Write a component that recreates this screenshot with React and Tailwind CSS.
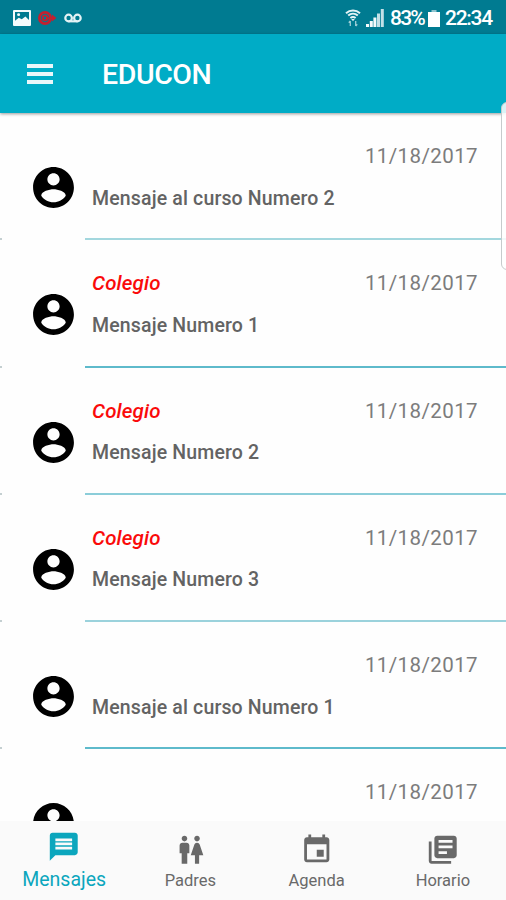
import React, { useState } from 'react';

const mensajes = [
    { id: 1, autor: '', texto: 'Mensaje al curso Numero 2', fecha: '11/18/2017', linea: 'h-[2px] bg-[#a3d7de]' },
    { id: 2, autor: 'Colegio', texto: 'Mensaje Numero 1', fecha: '11/18/2017', linea: 'h-[2px] bg-[#5ebacb]' },
    { id: 3, autor: 'Colegio', texto: 'Mensaje Numero 2', fecha: '11/18/2017', linea: 'h-[2px] bg-[#8bcdd9]' },
    { id: 4, autor: 'Colegio', texto: 'Mensaje Numero 3', fecha: '11/18/2017', linea: 'h-[2px] bg-[#9bd2dc]' },
    { id: 5, autor: '', texto: 'Mensaje al curso Numero 1', fecha: '11/18/2017', linea: 'h-[2px] bg-[#5ebacb]' },
    { id: 6, autor: '', texto: '', fecha: '11/18/2017', linea: 'h-[2px] bg-[#8bcdd9]' },
];

const tabs = [
    {
        nombre: 'Mensajes',
        icono: 'M20 2H4c-1.1 0-1.99.9-1.99 2L2 22l4-4h14c1.1 0 2-.9 2-2V4c0-1.1-.9-2-2-2zm-2 12H6v-2h12v2zm0-3H6V9h12v2zm0-3H6V6h12v2z',
    },
    {
        nombre: 'Padres',
        icono: 'M5.5 22v-7.5H4V9c0-1.1.9-2 2-2h3c1.1 0 2 .9 2 2v5.5H9.5V22h-4zM18 22v-6h3l-2.54-7.63C18.18 7.55 17.42 7 16.56 7h-.12c-.86 0-1.63.55-1.9 1.37L12 16h3v6h3zM7.5 6c1.11 0 2-.89 2-2s-.89-2-2-2-2 .89-2 2 .89 2 2 2zm9 0c1.11 0 2-.89 2-2s-.89-2-2-2-2 .89-2 2 .89 2 2 2z',
    },
    {
        nombre: 'Agenda',
        icono: 'M17 12h-5v5h5v-5zM16 1v2H8V1H6v2H5c-1.11 0-1.99.9-1.99 2L3 19c0 1.1.89 2 2 2h14c1.1 0 2-.9 2-2V5c0-1.1-.9-2-2-2h-1V1h-2zm3 18H5V8h14v11z',
    },
    {
        nombre: 'Horario',
        icono: 'M4 6H2v14c0 1.1.9 2 2 2h14v-2H4V6zm16-4H8c-1.1 0-2 .9-2 2v12c0 1.1.9 2 2 2h12c1.1 0 2-.9 2-2V4c0-1.1-.9-2-2-2zm-1 9H9V9h10v2zm-4 4H9v-2h6v2zm4-8H9V5h10v2z',
    },
];

function StatusBar() {
    return (
        <div className="flex h-[34px] shrink-0 items-center justify-between bg-[#007b91] pl-[13px] pr-[14px] pt-[2px] text-white">
            <div className="flex items-center gap-[7px] pb-px">
                <svg className="h-[16px] w-[18px]" viewBox="0 0 18 17" preserveAspectRatio="none">
                    <path fill="#f4fbfc" fillRule="evenodd" d="M1 0h16a1 1 0 0 1 1 1v15a1 1 0 0 1-1 1H1a1 1 0 0 1-1-1V1a1 1 0 0 1 1-1zM2 2v9.3l3.8-3 3 1.6 3.600-3 3.600 3.600V2z" />
                    <circle cx="5.6" cy="5" r="1.5" fill="#f4fbfc" />
                </svg>
                <svg className="h-[16px] w-[19px]" viewBox="0 0 19 16">
                    <circle cx="7" cy="8" r="5.600" fill="none" stroke="#c3202f" strokeWidth="2.8" />
                    <circle cx="7" cy="8" r="2.300" fill="none" stroke="#c3202f" strokeWidth="1.8" />
                    <path d="M8 7.2h6V4.500l4.400 3.500-4.400 3.500V9.200H8z" fill="#c3202f" />
                </svg>
                <svg className="h-[10px] w-[18px]" viewBox="0 0 18 10" fill="none" stroke="#e4f3f5" strokeWidth="2.2">
                    <circle cx="4.600" cy="5" r="3.300" />
                    <circle cx="13.400" cy="5" r="3.300" />
                    <path d="M4.600 8.300h8.800" />
                </svg>
            </div>
            <div className="flex items-center">
                <svg className="h-[18px] w-[16px]" viewBox="0 0 16 18" fill="none" stroke="#e4f3f5">
                    <path d="M1 4.200C5 .600 11 .600 15 4.200M3.200 6.600c2.800-2.400 6.800-2.400 9.600 0M5.400 9c1.600-1.300 3.600-1.300 5.200 0" strokeWidth="2" />
                    <path d="M6.200 10h3.600L8 12.200z" fill="#e4f3f5" stroke="none" />
                    <path d="M5.300 12v5M3.700 13.600 5.300 12M10.700 12v5M12.300 15.400 10.700 17" strokeWidth="1.300" opacity=".7" />
                </svg>
                <svg className="ml-[5px] h-[18px] w-[18px]" viewBox="0 0 18 18" fill="#f4fbfc">
                    <path d="M0 15h3v3H0zM3.800 12h3v6h-3zM7.400 8.500h3V18h-3z" />
                    <path d="M11 4.500h3V18h-3zM14.800 0h3v18h-3z" opacity=".8" />
                </svg>
                <span className="ml-[6px] w-[34px] whitespace-nowrap text-[21px] font-medium leading-none tracking-[-1.8px]">83%</span>
                <svg className="ml-[4px] h-[17px] w-[12px]" viewBox="0 0 12 17">
                    <path d="M3.500 0h5v2h-5z" fill="#8fc4ce" />
                    <path d="M0 2h12v15H0z" fill="#fff" />
                </svg>
                <span className="ml-[5px] w-[47px] whitespace-nowrap text-[21px] font-medium leading-none tracking-[-1.300px]">22:34</span>
            </div>
        </div>
    );
}

function Header() {
    return (
        <header className="z-10 flex h-[79px] shrink-0 items-center bg-[#00acc6] pl-[27px] text-white shadow-[0_1px_3px_rgba(0,0,0,0.4)]">
            <button className="flex w-[26px] flex-col gap-[4px]">
                <span className="h-[4px] w-full bg-[#e9f7fa]" />
                <span className="h-[4px] w-full bg-[#e9f7fa]" />
                <span className="h-[4px] w-full bg-[#e9f7fa]" />
            </button>
            <h1 className="ml-[49px] pt-[3px] text-[28.500px] font-medium leading-none tracking-[-0.4px]">EDUCON</h1>
        </header>
    );
}

function Mensaje({ mensaje }) {
    return (
        <li className="flex h-[127.250px] shrink-0">
            <div className="flex w-[85px] shrink-0 flex-col justify-between">
                <svg className="ml-[28.500px] mt-[50px] h-[49px] w-[49px]" viewBox="0 0 24 24">
                    <path d="M12 2C6.480 2 2 6.480 2 12s4.480 10 10 10 10-4.480 10-10S17.520 2 12 2zm0 3c1.660 0 3 1.340 3 3s-1.340 3-3 3-3-1.340-3-3 1.340-3 3-3zm0 14.200c-2.500 0-4.710-1.280-6-3.220.03-1.990 4-3.080 6-3.080 1.990 0 5.970 1.090 6 3.080-1.290 1.940-3.500 3.220-6 3.220z" />
                </svg>
                <div className="h-[2px] w-[2px] bg-[#c4cfd1]" />
            </div>
            <div className="flex grow flex-col">
                <div className="mt-[29.500px] flex h-[28px] items-center justify-between pl-[7px] pr-[28px]">
                    <span className="text-[20.500px] font-medium italic tracking-[0.150px] text-[#fa0a0a]">{mensaje.autor}</span>
                    <span className="text-[20.500px] tracking-[0.400px] text-[#7c7c7c]">{mensaje.fecha}</span>
                </div>
                <p className="mt-[14px] h-[28px] pl-[7px] text-[19.500px] font-medium leading-[28px] tracking-[0.150px] text-[#636363]">{mensaje.texto}</p>
                <div className={`mt-auto ${mensaje.linea}`} />
            </div>
        </li>
    );
}

function App() {
    const [tabActivo, setTabActivo] = useState('Mensajes');

    return (
        <div className="relative flex h-[900px] w-[506px] flex-col overflow-hidden bg-[#fefefe] font-[Roboto,sans-serif]">
            <StatusBar />
            <Header />
            <ul className="flex min-h-0 grow flex-col overflow-hidden">
                {mensajes.map((mensaje) => (
                    <Mensaje key={mensaje.id} mensaje={mensaje} />
                ))}
            </ul>
            <nav className="grid h-[79px] shrink-0 grid-cols-4 bg-[#fafafa] pl-px">
                {tabs.map((tab) => {
                    const activo = tab.nombre === tabActivo;
                    return (
                        <button
                            key={tab.nombre}
                            onClick={() => setTabActivo(tab.nombre)}
                            className={`flex flex-col items-center ${activo ? 'pt-[9px] text-[#0ba6bd]' : 'pt-[12px] text-[#696969]'}`}
                        >
                            <svg className="h-[33.500px] w-[33.500px]" viewBox="0 0 24 24" fill="currentColor">
                                <path d={tab.icono} />
                            </svg>
                            <span className={activo ? 'mt-[4px] text-[19.500px] leading-[24px]' : 'mt-[3px] text-[16.500px] leading-[22px]'}>{tab.nombre}</span>
                        </button>
                    );
                })}
            </nav>
            {/* edge panel handle */}
            <div className="absolute right-[-7px] top-[102px] z-20 h-[168px] w-[12px] rounded-[6px] border border-[#c6cbcc] bg-white/85" />
        </div>
    );
}

export default App;
